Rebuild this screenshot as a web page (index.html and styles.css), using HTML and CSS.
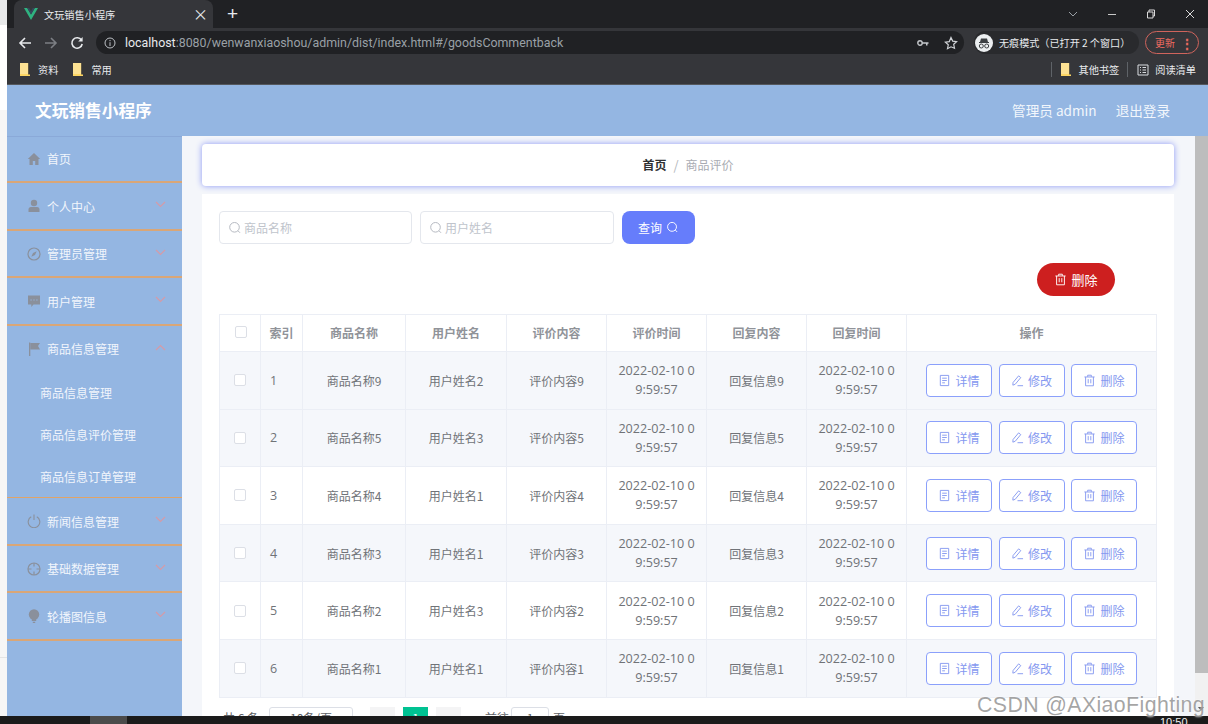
FILE: index.html
```html
<!DOCTYPE html>
<html lang="zh-CN">
<head>
<meta charset="utf-8">
<title>文玩销售小程序</title>
<link rel="stylesheet" href="styles.css">
</head>
<body>
<svg class="sprite" width="0" height="0" aria-hidden="true">
  <symbol id="i-search" viewBox="0 0 14 14"><circle cx="6.5" cy="6.3" r="4.8" fill="none" stroke="currentColor" stroke-width="1"/><path d="M10 9.8l2 2" fill="none" stroke="currentColor" stroke-width="1"/></symbol>
  <symbol id="i-doc" viewBox="0 0 12 14"><path d="M1.5 1.5h9v11h-9z M3.5 4.5h5 M3.5 7h5 M3.5 9.5h3" fill="none" stroke="currentColor" stroke-width="1"/></symbol>
  <symbol id="i-edit" viewBox="0 0 14 14"><path d="M2.2 9.2L8.2 2l2.3 1.9-6 7.2-2.5.9z" fill="none" stroke="currentColor" stroke-width="1"/><path d="M7 12.6h6" fill="none" stroke="currentColor" stroke-width="1"/></symbol>
  <symbol id="i-trash" viewBox="0 0 14 14"><path d="M1.5 3.2h11 M5 3V1.3h4V3 M2.8 3.2v9.5h8.4V3.2 M5.6 5.5v4.5 M8.4 5.5v4.5" fill="none" stroke="currentColor" stroke-width="1"/></symbol>
  <symbol id="i-chev" viewBox="0 0 11 7"><path d="M1 1l4.500 4.500L10 1" fill="none" stroke="currentColor" stroke-width="1.100"/></symbol>
  <symbol id="i-folder" viewBox="0 0 10 13"><path d="M0 0h8.2v11.5H10V13H0z" fill="#fdd663"/><path d="M0 0h8v11H0z" fill="#fde293"/></symbol>
</svg>
<div class="screen">
  <div class="desk">
    <div class="strip"></div>
    <div class="browser">
      <div class="tabbar">
        <div class="tab">
          <svg class="favicon" viewBox="0 0 14 12"><path d="M0 0h3.2L7 6.6 10.8 0H14L7 12z" fill="#2fb380"/><path d="M3.2 0h2L7 3.2 8.8 0h2L7 6.6z" fill="#35495e"/></svg>
          <span class="tab-title">文玩销售小程序</span>
          <span class="tab-close">×</span>
        </div>
        <span class="newtab">+</span>
        <div class="winctl">
          <svg class="win-ic" viewBox="0 0 10 6"><path d="M1 1l4 4 4-4" fill="none" stroke="#9aa0a6"/></svg>
          <svg class="win-ic" viewBox="0 0 10 10"><path d="M1 5.5h8" stroke="#c8c8c8"/></svg>
          <svg class="win-ic" viewBox="0 0 10 10"><path d="M1.5 3h5.5v6H1.5z M3 3V1h5.5v6H7" fill="none" stroke="#dadada"/></svg>
          <svg class="win-ic" viewBox="0 0 10 10"><path d="M1 1l8 8M9 1l-8 8" stroke="#dadada"/></svg>
        </div>
      </div>
      <div class="toolbar">
        <svg class="nav-ic" viewBox="0 0 14 14"><path d="M13 7H2M7 2L2 7l5 5" fill="none" stroke="#e8eaed" stroke-width="1.6"/></svg>
        <svg class="nav-ic" viewBox="0 0 14 14"><path d="M1 7h11M7 2l5 5-5 5" fill="none" stroke="#7c7f84" stroke-width="1.6"/></svg>
        <svg class="nav-ic" viewBox="0 0 14 14"><path d="M11.5 4.2A5.2 5.2 0 1 0 12.2 8" fill="none" stroke="#e8eaed" stroke-width="1.6"/><path d="M12.6 1v4.4H8.2z" fill="#e8eaed"/></svg>
        <div class="omnibox">
          <svg class="info-ic" viewBox="0 0 12 12"><circle cx="6" cy="6" r="5" fill="none" stroke="#bdc1c6"/><path d="M6 5.2V9M6 3v1.2" stroke="#bdc1c6"/></svg>
          <span class="url"><span class="host">localhost</span>:8080/wenwanxiaoshou/admin/dist/index.html#/goodsCommentback</span>
          <svg class="key-ic" viewBox="0 0 12 8"><circle cx="3" cy="4" r="2.2" fill="none" stroke="#c4c7cb" stroke-width="1.4"/><path d="M5 3.2h6.5v1.6H10.500V6.500H9V4.800H5z" fill="#c4c7cb"/></svg>
          <svg class="star-ic" viewBox="0 0 14 14"><path d="M7 1.500l1.700 3.600 3.900.5-2.900 2.700.8 3.900L7 10.800l-3.500 1.900.8-3.900-2.900-2.700 3.900-.5z" fill="none" stroke="#d0d3d7" stroke-width="1.200"/></svg>
        </div>
        <div class="incog">
          <svg class="incog-ic" viewBox="0 0 18 18"><circle cx="9" cy="9" r="9" fill="#eceff1"/><path d="M4 8h10v1H4zM6 4.500h6L13 8H5z" fill="#3c4043"/><circle cx="6.300" cy="12" r="2" fill="none" stroke="#3c4043"/><circle cx="11.700" cy="12" r="2" fill="none" stroke="#3c4043"/></svg>
          <span class="incog-text">无痕模式（已打开 2 个窗口）</span>
        </div>
        <div class="update"><span>更新</span><span class="dots">⋮</span></div>
      </div>
      <div class="bookmarks">
        <svg class="bm-ic" viewBox="0 0 10 13"><use href="#i-folder"/></svg><span class="bm-text">资料</span>
        <svg class="bm-ic bm-next" viewBox="0 0 10 13"><use href="#i-folder"/></svg><span class="bm-text">常用</span>
        <span class="bm-fill"></span>
        <span class="bm-sep"></span>
        <svg class="bm-ic" viewBox="0 0 10 13"><use href="#i-folder"/></svg><span class="bm-text">其他书签</span>
        <span class="bm-sep"></span>
        <svg class="bm-read" viewBox="0 0 12 12"><path d="M1 1h10v10H1z M3 3.500h1 M5.500 3.500H9 M3 6h1 M5.500 6H9 M3 8.500h1 M5.500 8.500H9" fill="none" stroke="#dadce0"/></svg><span class="bm-text">阅读清单</span>
      </div>
      <div class="app">
        <header class="apphead">
          <div class="brand">文玩销售小程序</div>
          <div class="userbox"><span>管理员 admin</span><span>退出登录</span></div>
        </header>
        <div class="appbody">
          <nav class="sidebar">
            <a class="menu menu-first">
              <svg class="m-ic" viewBox="0 0 14 14"><path d="M7 1L.8 7H2.500v6h3.300V9h2.400v4h3.300V7h1.700z" fill="currentColor"/></svg>首页
            </a>
            <a class="menu">
              <svg class="m-ic" viewBox="0 0 14 14"><circle cx="7" cy="4" r="3.200" fill="currentColor"/><path d="M1.500 13V10.500Q1.500 8 4 8h6q2.500 0 2.500 2.500V13z" fill="currentColor"/></svg>个人中心
              <svg class="chev"><use href="#i-chev"/></svg>
            </a>
            <a class="menu menu-short">
              <svg class="m-ic" viewBox="0 0 14 14"><circle cx="7" cy="7" r="6" fill="none" stroke="currentColor" stroke-width="1.200"/><path d="M9.700 4.300L8 8 4.300 9.700 6 6z" fill="currentColor"/></svg>管理员管理
              <svg class="chev"><use href="#i-chev"/></svg>
            </a>
            <a class="menu">
              <svg class="m-ic" viewBox="0 0 14 14"><path d="M1 1.500h12v9H6.500L4.300 13v-2.500H1z" fill="currentColor"/><path d="M3.500 6h1.200M6.400 6h1.200M9.300 6h1.200" stroke="#94b6e2" stroke-width="1.200"/></svg>用户管理
              <svg class="chev"><use href="#i-chev"/></svg>
            </a>
            <div class="group">
              <a class="menu menu-open">
                <svg class="m-ic" viewBox="0 0 14 14"><path d="M2 .500h1.300V14H2z" fill="currentColor"/><path d="M3.300 1H13l-2 3 2 3.500H3.300z" fill="currentColor"/></svg>商品信息管理
                <svg class="chev chev-up"><use href="#i-chev"/></svg>
              </a>
              <a class="submenu">商品信息管理</a>
              <a class="submenu">商品信息评价管理</a>
              <a class="submenu">商品信息订单管理</a>
            </div>
            <a class="menu">
              <svg class="m-ic" viewBox="0 0 14 14"><path d="M4.200 2.800a5.800 5.800 0 1 0 5.600 0" fill="none" stroke="currentColor" stroke-width="1.100"/><path d="M7 .500v5.500" stroke="currentColor" stroke-width="1.100"/></svg>新闻信息管理
              <svg class="chev"><use href="#i-chev"/></svg>
            </a>
            <a class="menu menu-short">
              <svg class="m-ic" viewBox="0 0 14 14"><circle cx="7" cy="7" r="6" fill="none" stroke="currentColor" stroke-width="1.200"/><path d="M7 1v3.500M7 9.500V13M1 7h3.500M9.500 7H13" stroke="currentColor" stroke-width="1.200"/></svg>基础数据管理
              <svg class="chev"><use href="#i-chev"/></svg>
            </a>
            <a class="menu">
              <svg class="m-ic" viewBox="0 0 14 14"><circle cx="7" cy="5.500" r="5.200" fill="currentColor"/><path d="M4.800 10h4.400v2H4.800zM5.800 12.700h2.400V14H5.800z" fill="currentColor"/></svg>轮播图信息
              <svg class="chev"><use href="#i-chev"/></svg>
            </a>
          </nav>
          <main class="content">
            <div class="crumb"><b>首页</b><span class="slash">/</span><span class="crumb-now">商品评价</span></div>
            <section class="panel">
              <div class="filters">
                <div class="field"><svg class="f-ic"><use href="#i-search"/></svg>商品名称</div>
                <div class="field"><svg class="f-ic"><use href="#i-search"/></svg>用户姓名</div>
                <button class="btn-query">查询<svg class="q-ic"><use href="#i-search"/></svg></button>
              </div>
              <div class="actions">
                <button class="btn-del"><svg class="d-ic"><use href="#i-trash"/></svg>删除</button>
              </div>
              <table class="grid">
                <colgroup>
                  <col class="c-check"><col class="c-idx"><col class="c-name"><col class="c-user"><col class="c-w"><col class="c-w"><col class="c-w"><col class="c-w"><col>
                </colgroup>
                <thead>
                  <tr><th><span class="check"></span></th><th>索引</th><th>商品名称</th><th>用户姓名</th><th>评价内容</th><th>评价时间</th><th>回复内容</th><th>回复时间</th><th>操作</th></tr>
                </thead>
                <tbody>
                  <tr class="shade"><td><span class="check"></span></td><td class="idx">1</td><td>商品名称9</td><td>用户姓名2</td><td>评价内容9</td><td class="date">2022-02-10 0<br>9:59:57</td><td>回复信息9</td><td class="date">2022-02-10 0<br>9:59:57</td><td><div class="ops"><button class="op"><svg class="o-ic"><use href="#i-doc"/></svg>详情</button><button class="op"><svg class="o-ic"><use href="#i-edit"/></svg>修改</button><button class="op"><svg class="o-ic"><use href="#i-trash"/></svg>删除</button></div></td></tr>
                  <tr class="shade"><td><span class="check"></span></td><td class="idx">2</td><td>商品名称5</td><td>用户姓名3</td><td>评价内容5</td><td class="date">2022-02-10 0<br>9:59:57</td><td>回复信息5</td><td class="date">2022-02-10 0<br>9:59:57</td><td><div class="ops"><button class="op"><svg class="o-ic"><use href="#i-doc"/></svg>详情</button><button class="op"><svg class="o-ic"><use href="#i-edit"/></svg>修改</button><button class="op"><svg class="o-ic"><use href="#i-trash"/></svg>删除</button></div></td></tr>
                  <tr><td><span class="check"></span></td><td class="idx">3</td><td>商品名称4</td><td>用户姓名1</td><td>评价内容4</td><td class="date">2022-02-10 0<br>9:59:57</td><td>回复信息4</td><td class="date">2022-02-10 0<br>9:59:57</td><td><div class="ops"><button class="op"><svg class="o-ic"><use href="#i-doc"/></svg>详情</button><button class="op"><svg class="o-ic"><use href="#i-edit"/></svg>修改</button><button class="op"><svg class="o-ic"><use href="#i-trash"/></svg>删除</button></div></td></tr>
                  <tr class="shade"><td><span class="check"></span></td><td class="idx">4</td><td>商品名称3</td><td>用户姓名1</td><td>评价内容3</td><td class="date">2022-02-10 0<br>9:59:57</td><td>回复信息3</td><td class="date">2022-02-10 0<br>9:59:57</td><td><div class="ops"><button class="op"><svg class="o-ic"><use href="#i-doc"/></svg>详情</button><button class="op"><svg class="o-ic"><use href="#i-edit"/></svg>修改</button><button class="op"><svg class="o-ic"><use href="#i-trash"/></svg>删除</button></div></td></tr>
                  <tr><td><span class="check"></span></td><td class="idx">5</td><td>商品名称2</td><td>用户姓名3</td><td>评价内容2</td><td class="date">2022-02-10 0<br>9:59:57</td><td>回复信息2</td><td class="date">2022-02-10 0<br>9:59:57</td><td><div class="ops"><button class="op"><svg class="o-ic"><use href="#i-doc"/></svg>详情</button><button class="op"><svg class="o-ic"><use href="#i-edit"/></svg>修改</button><button class="op"><svg class="o-ic"><use href="#i-trash"/></svg>删除</button></div></td></tr>
                  <tr class="shade"><td><span class="check"></span></td><td class="idx">6</td><td>商品名称1</td><td>用户姓名1</td><td>评价内容1</td><td class="date">2022-02-10 0<br>9:59:57</td><td>回复信息1</td><td class="date">2022-02-10 0<br>9:59:57</td><td><div class="ops"><button class="op"><svg class="o-ic"><use href="#i-doc"/></svg>详情</button><button class="op"><svg class="o-ic"><use href="#i-edit"/></svg>修改</button><button class="op"><svg class="o-ic"><use href="#i-trash"/></svg>删除</button></div></td></tr>
                </tbody>
              </table>
              <div class="pager">
                <span class="total">共 6 条</span>
                <span class="size">10条/页</span>
                <span class="pg pg-first">‹</span><span class="pg pg-on">1</span><span class="pg">›</span>
                <span class="goto">前往</span><span class="jump">1</span><span class="unit">页</span>
              </div>
            </section>
          </main>
          <div class="scrollbar">
            <div class="thumb"></div>
            <div class="arrow"></div>
          </div>
        </div>
      </div>
    </div>
  </div>
  <footer class="taskbar"><span class="task-app"></span><span class="clock">10:50</span></footer>
  <div class="watermark">CSDN @AXiaoFighting</div>
</div>
</body>
</html>
```
FILE: styles.css
```css
* { box-sizing: border-box; }
html, body { margin: 0; height: 724px; overflow: hidden; }
body { font-family: "Noto Sans CJK SC", "Open Sans", sans-serif; font-size: 12px; color: #606266; background: #fff; }
.sprite { position: absolute; }
.screen { position: relative; width: 1208px; height: 724px; display: flex; flex-direction: column; overflow: hidden; }
.desk { display: flex; height: 716px; }
.strip { width: 7px; background: linear-gradient(#e8e9ea 0 25px, #fff 25px 110px, #f6f6f6 110px 657px, #e4e4e4 657px 658px, #f6f6f6 658px); }
.browser { flex: 1; display: flex; flex-direction: column; min-width: 0; background: #202124; }

.tabbar { height: 28px; display: flex; align-items: flex-end; padding-left: 7px; background: #202124; }
.tab { width: 199px; height: 28px; background: #35363a; border-radius: 8px 8px 0 0; display: flex; align-items: center; padding-left: 10px; color: #e8eaed; }
.favicon { width: 14px; height: 12px; margin-right: 6px; }
.tab-title { flex: 1; font-size: 10.200px; }
.tab-close { width: 14px; margin-right: 6px; font-size: 15px; line-height: 14px; color: #e8eaed; }
.newtab { align-self: center; margin-left: 14px; font-size: 19px; line-height: 24px; color: #e8eaed; font-family: "Liberation Sans", sans-serif; }
.winctl { margin-left: auto; align-self: center; display: flex; padding-right: 13px; gap: 29px; }
.win-ic { width: 10px; height: 10px; }

.toolbar { height: 29px; background: #35363a; display: flex; align-items: center; padding-left: 11px; }
.nav-ic { width: 14px; height: 14px; margin-right: 12px; }
.omnibox { width: 868px; height: 23px; border-radius: 12px; background: #202124; display: flex; align-items: center; padding-left: 8px; }
.info-ic { width: 12px; height: 12px; margin-right: 9px; }
.url { flex: 1; font-family: "Roboto", "Liberation Sans", sans-serif; font-size: 12.400px; color: #9aa0a6; white-space: nowrap; }
.host { color: #e8eaed; }
.key-ic { width: 12px; height: 8px; margin-right: 15px; }
.star-ic { width: 14px; height: 14px; margin-right: 6px; }
.incog { margin-left: 10px; width: 165px; height: 23px; border-radius: 12px; background: #292a2d; display: flex; align-items: center; padding-left: 1px; }
.incog-ic { width: 18px; height: 18px; margin-right: 6px; }
.incog-text { font-size: 10.100px; color: #e8eaed; white-space: nowrap; }
.update { margin-left: 6px; width: 54px; height: 23px; border: 1px solid #d0645c; border-radius: 12px; display: flex; align-items: center; justify-content: space-between; padding: 0 4px 0 9px; font-size: 10px; color: #ee6b60; }
.dots { font-size: 14px; font-weight: 700; }

.bookmarks { height: 28px; background: #35363a; display: flex; align-items: center; padding: 0 0 2px 13px; color: #e8eaed; border-bottom: 1px solid #55585d; }
.bm-ic { width: 10px; height: 13px; margin-right: 8px; }
.bm-next { margin-left: 15px; }
.bm-text { font-size: 10.200px; }
.bm-fill { flex: 1; }
.bm-sep { width: 1px; height: 15px; background: #5f6368; margin: 0 9px 0 8px; }
.bm-read { width: 12px; height: 12px; margin: 0 6px 0 0; }
.bookmarks .bm-text:last-child { margin-right: 12px; }

.app { flex: 1; display: flex; flex-direction: column; min-height: 0; background: #f4f6fa; }
.apphead { height: 51px; background: #94b6e2; display: flex; align-items: center; justify-content: space-between; padding: 0 38px 1px 28px; color: #fff; }
.brand { font-size: 16.700px; font-weight: 700; }
.userbox { display: flex; gap: 19px; font-size: 13.600px; color: #f2f6fc; }

.appbody { flex: 1; display: flex; min-height: 0; }
.sidebar { width: 175px; background: #94b6e2; border-top: 1px solid #8aa9d8; color: #f1f5fc; flex: none; }
.menu { height: 48px; display: flex; align-items: center; padding-left: 20px; position: relative; border-bottom: 2px solid #d9a677; font-size: 12px; }
.menu-first { height: 46px; padding-bottom: 1px; }
.menu-short { height: 47px; }
.menu-open { border-bottom: 0; height: 46px; padding-bottom: 1px; }
.m-ic { width: 14px; height: 14px; margin-right: 6px; color: #8a909c; flex: none; }
.chev { position: absolute; right: 16px; top: 18px; width: 11px; height: 7px; color: #d79aa6; }
.chev-up { transform: rotate(180deg); }
.group { border-bottom: 1px solid #e0a468; }
.submenu { display: flex; align-items: center; height: 41.700px; padding-left: 33px; }

.content { flex: 1; min-width: 0; padding: 8px 21px 0 20px; overflow: hidden; }
.crumb { height: 42px; padding-bottom: 2px; background: #fff; border-radius: 4px; box-shadow: 0 0 6px #8b97f5; display: flex; align-items: center; justify-content: center; font-size: 12px; color: #a8abb2; }
.crumb b { color: #303133; font-weight: 700; }
.slash { margin: 0 7px; color: #b4b7bc; font-size: 13px; }
.panel { margin-top: 8px; background: #fff; padding: 17px 17px 0; height: 600px; }
.filters { display: flex; gap: 8px; height: 33px; }
.field { width: 193px; height: 33px; border: 1px solid #e4e7ed; border-radius: 4px; display: flex; align-items: center; padding-left: 8px; color: #c0c4cc; background: #fff; }
.f-ic { width: 14px; height: 14px; margin-right: 2px; color: #b6bac2; }
.filters .field + .field { width: 194px; }
.btn-query { width: 73px; height: 33px; border: 0; border-radius: 8px; background: #667dfb; color: #fff; font: inherit; display: flex; align-items: center; justify-content: center; }
.q-ic { width: 13px; height: 13px; margin-left: 4px; }
.actions { display: flex; justify-content: flex-end; margin: 19px 42px 0 0; }
.btn-del { width: 78px; height: 33px; border: 0; border-radius: 17px; background: #cd1f1f; color: #fff; font: inherit; font-size: 13px; display: flex; align-items: center; justify-content: center; }
.d-ic { width: 13px; height: 13px; margin-right: 4px; }

.grid { margin-top: 18px; width: 938px; table-layout: fixed; border-collapse: collapse; border: 1px solid #ebeef5; background: #fff; }
.c-check { width: 41px; } .c-idx { width: 42px; } .c-name { width: 103px; } .c-user { width: 101px; } .c-w { width: 100px; }
.grid th { height: 37px; font-size: 12px; font-weight: 700; color: #909399; border: 1px solid #ebeef5; padding: 0 0 2px; text-align: center; }
.grid td { height: 57.600px; font-size: 12px; color: #707378; border: 1px solid #ebeef5; padding: 0; text-align: center; }
.shade td { background: #f5f7fb; }
.check { display: block; width: 12px; height: 12px; background: #fff; border: 1px solid #dcdfe6; border-radius: 2px; margin-left: 15px; }
.grid td .check { margin-left: 14px; }
.grid td.idx { text-align: left; padding-left: 9px; font-family: "Open Sans", sans-serif; font-size: 12.500px; }
.grid td.date { font-family: "Open Sans", sans-serif; font-size: 12.600px; line-height: 19px; }
.ops { display: flex; justify-content: center; gap: 6.500px; }
.op { width: 66px; height: 33px; border: 1px solid #8ba0fb; border-radius: 4px; background: #fff; color: #8598f0; font: inherit; font-size: 12px; display: flex; align-items: center; justify-content: center; padding: 0; }
.o-ic { width: 13px; height: 13px; margin-right: 4px; }

.pager { display: flex; align-items: center; margin-top: 9px; height: 22px; padding-left: 4px; color: #606266; font-size: 12px; }
.total { width: 36px; white-space: nowrap; }
.size { width: 84px; height: 22px; margin-left: 10px; border: 1px solid #dcdfe6; border-radius: 3px; text-align: center; line-height: 20px; }
.pg { width: 25px; height: 22px; margin-left: 8px; background: #f4f4f5; text-align: center; line-height: 22px; color: #909399; }
.pg-first { margin-left: 17px; }
.pg-on { background: #00c292; color: #fff; }
.goto { margin-left: 24px; }
.jump { width: 38px; height: 22px; margin-left: 2px; border: 1px solid #dcdfe6; border-radius: 3px; text-align: center; line-height: 20px; }
.unit { margin-left: 4px; }

.scrollbar { width: 13px; flex: none; background: #f1f1f1; display: flex; flex-direction: column; position: relative; }
.thumb { height: 537px; background: #bdbdbd; }
.arrow { position: absolute; left: 3px; bottom: 5px; border: 3.500px solid transparent; border-top: 4px solid #505050; border-bottom: 0; }

.taskbar { height: 8px; background: #1b1b1b; position: relative; overflow: hidden; display: flex; }
.task-app { width: 37px; margin-left: 90px; background: #4b4b4b; }
.clock { position: absolute; left: 1160px; top: 0; font-family: "Liberation Sans", sans-serif; font-size: 11px; line-height: 12px; color: #f0f0f0; }
.watermark { position: absolute; left: 977px; top: 691px; font-family: "Liberation Sans", sans-serif; font-size: 21.300px; line-height: 28px; letter-spacing: .4px; color: rgba(125,125,125,.7); text-shadow: 0 0 2px #fff; white-space: nowrap; }
```
